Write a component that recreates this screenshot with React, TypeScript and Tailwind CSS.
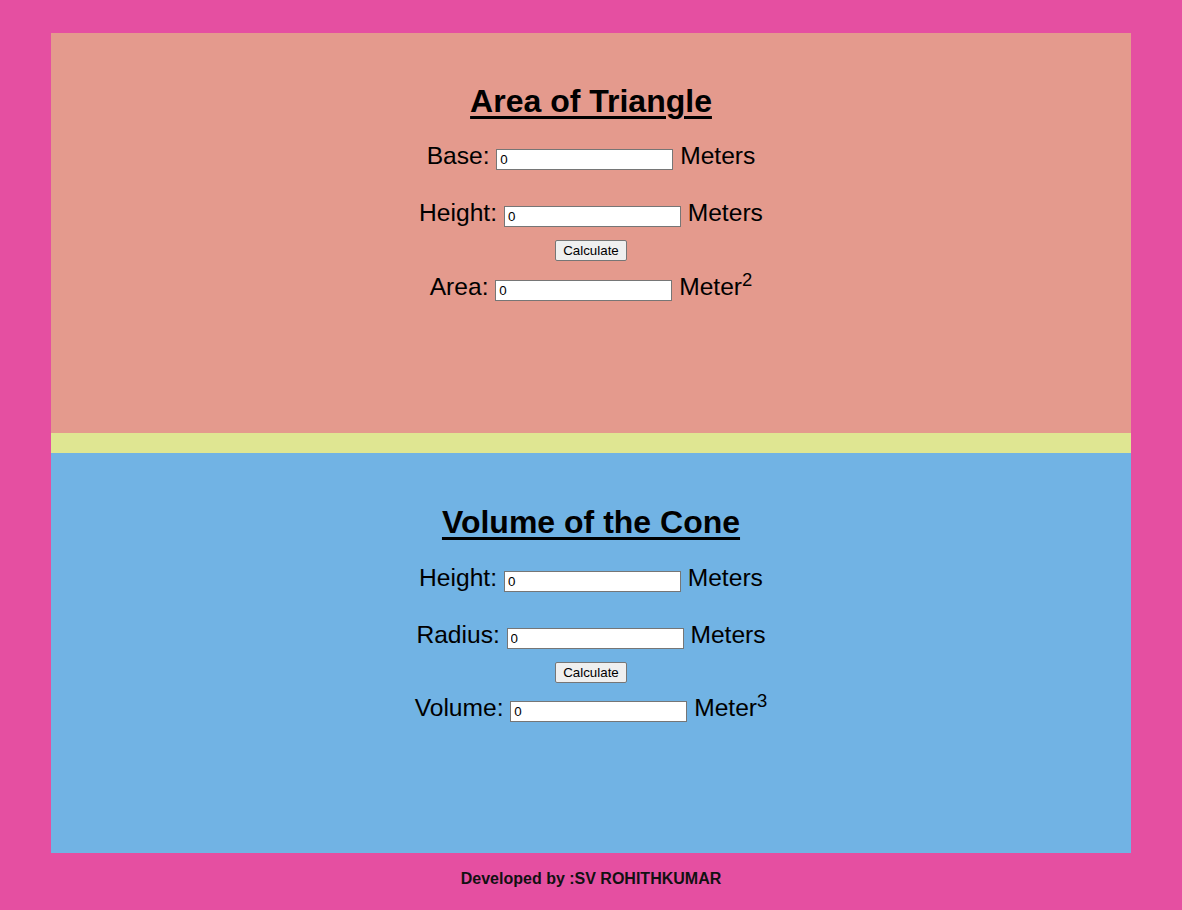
import { useState } from "react"

function NumInput({ value, onChange }: { value: string; onChange?: (v: string) => void }) {
  return (
    <input
      type="text"
      value={value}
      onChange={(e) => onChange?.(e.target.value)}
      className="inline-block h-[21px] w-[177px] border border-[#767676] bg-white pl-[3px] pr-[2px] py-0 text-[13.33px] leading-[15px] text-black align-baseline outline-none"
    />
  )
}

function CalcButton({ onClick }: { onClick: () => void }) {
  return (
    <button
      onClick={onClick}
      className="h-[21px] w-[72px] rounded-[2px] border border-[#767676] bg-[#efefef] text-[13.33px] leading-[15px] text-black"
    >
      Calculate
    </button>
  )
}

export default function App() {
  const [base, setBase] = useState("0")
  const [height, setHeight] = useState("0")
  const [area, setArea] = useState("0")

  const [coneHeight, setConeHeight] = useState("0")
  const [radius, setRadius] = useState("0")
  const [volume, setVolume] = useState("0")

  const calcArea = () => {
    const a = 0.5 * (parseFloat(base) || 0) * (parseFloat(height) || 0)
    setArea(String(a))
  }

  const calcVolume = () => {
    const r = parseFloat(radius) || 0
    const h = parseFloat(coneHeight) || 0
    setVolume(String((Math.PI * r * r * h) / 3))
  }

  return (
    <div className="min-h-screen bg-[#e54fa1] pt-[33px] font-['Liberation_Sans',Arial,sans-serif] text-black">
      <div className="mx-auto w-[1080px]">
        {/* triangle */}
        <section className="h-[400px] bg-[#e49a8d] pt-[50px] text-center">
          <h1 className="text-[32px] font-bold leading-[37px] underline underline-offset-[4px] decoration-[3px]">
            Area of Triangle
          </h1>
          <div className="mt-[22px] text-[24.6px] leading-[28px]">
            Base: <NumInput value={base} onChange={setBase} /> Meters
          </div>
          <div className="mt-[29px] text-[24.6px] leading-[28px]">
            Height: <NumInput value={height} onChange={setHeight} /> Meters
          </div>
          <div className="mt-[11px] h-[21px]">
            <CalcButton onClick={calcArea} />
          </div>
          <div className="mt-[14px] text-[24.6px] leading-[28px]">
            Area: <NumInput value={area} /> Meter<sup>2</sup>
          </div>
        </section>

        <div className="h-[20px] bg-[#dfe692]" />

        {/* cone */}
        <section className="h-[400px] bg-[#71b3e4] pt-[51px] text-center">
          <h1 className="text-[32px] font-bold leading-[37px] underline underline-offset-[4px] decoration-[3px]">
            Volume of the Cone
          </h1>
          <div className="mt-[23px] text-[24.6px] leading-[28px]">
            Height: <NumInput value={coneHeight} onChange={setConeHeight} /> Meters
          </div>
          <div className="mt-[29px] text-[24.6px] leading-[28px]">
            Radius: <NumInput value={radius} onChange={setRadius} /> Meters
          </div>
          <div className="mt-[11px] h-[21px]">
            <CalcButton onClick={calcVolume} />
          </div>
          <div className="mt-[13px] text-[24.6px] leading-[28px]">
            Volume: <NumInput value={volume} /> Meter<sup>3</sup>
          </div>
        </section>
      </div>

      <p className="pt-[17px] text-center text-[16px] font-bold leading-[18px] text-[#111]">
        Developed by :SV ROHITHKUMAR
      </p>
    </div>
  )
}
